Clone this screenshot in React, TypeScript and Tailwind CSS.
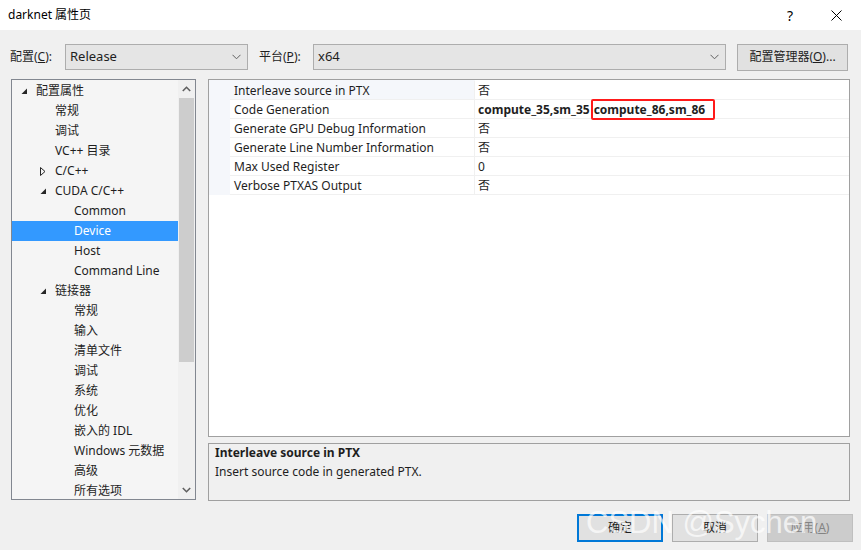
import React from 'react';

const FONT = '"Noto Sans", "Noto Sans CJK SC", sans-serif';

type TreeItem = { label: string; level: number; toggle?: 'open' | 'closed'; selected?: boolean };

const TREE: TreeItem[] = [
  { label: '配置属性', level: 0, toggle: 'open' },
  { label: '常规', level: 1 },
  { label: '调试', level: 1 },
  { label: 'VC++ 目录', level: 1 },
  { label: 'C/C++', level: 1, toggle: 'closed' },
  { label: 'CUDA C/C++', level: 1, toggle: 'open' },
  { label: 'Common', level: 2 },
  { label: 'Device', level: 2, selected: true },
  { label: 'Host', level: 2 },
  { label: 'Command Line', level: 2 },
  { label: '链接器', level: 1, toggle: 'open' },
  { label: '常规', level: 2 },
  { label: '输入', level: 2 },
  { label: '清单文件', level: 2 },
  { label: '调试', level: 2 },
  { label: '系统', level: 2 },
  { label: '优化', level: 2 },
  { label: '嵌入的 IDL', level: 2 },
  { label: 'Windows 元数据', level: 2 },
  { label: '高级', level: 2 },
  { label: '所有选项', level: 2 },
];

const PROPS: { name: string; value: React.ReactNode }[] = [
  { name: 'Interleave source in PTX', value: '否' },
  {
    name: 'Code Generation',
    value: (
      <span className="flex items-center font-bold">
        compute_35,sm_35
        <span className="ml-[1px] flex h-[21px] items-center rounded-[2px] border-2 border-[#ff1a1a] pl-[1px] pr-[8px]">
          compute_86,sm_86
        </span>
      </span>
    ),
  },
  { name: 'Generate GPU Debug Information', value: '否' },
  { name: 'Generate Line Number Information', value: '否' },
  { name: 'Max Used Register', value: '0' },
  { name: 'Verbose PTXAS Output', value: '否' },
];

function Chevron() {
  return (
    <svg width="9" height="6" viewBox="0 0 9 6">
      <path d="M0.5 0.8 L4.5 4.8 L8.5 0.8" fill="none" stroke="#606060" strokeWidth="1" />
    </svg>
  );
}

function Toggle({ kind }: { kind: 'open' | 'closed' }) {
  if (kind === 'open') {
    return (
      <svg width="7" height="7" viewBox="0 0 7 7">
        <path d="M6 0.5 L6 6 L0.5 6 Z" fill="#262626" />
      </svg>
    );
  }
  return (
    <svg width="6" height="9" viewBox="0 0 6 9">
      <path d="M0.5 0.5 L5 4.5 L0.5 8.5 Z" fill="none" stroke="#262626" strokeWidth="1" />
    </svg>
  );
}

function Combo({ value, width }: { value: string; width: string }) {
  return (
    <div className={`flex h-[26px] items-center justify-between border border-[#adadad] bg-[#e5e5e5] pl-[4px] pr-[6px] ${width}`}>
      <span className="text-[13px] text-[#1e1e1e]">{value}</span>
      <Chevron />
    </div>
  );
}

function Tree() {
  return (
    <div className="flex h-[421px] w-[185px] border border-[#828790] bg-[#f5f5f5]">
      <div className="flex flex-1 flex-col overflow-hidden pt-[1px]">
        {TREE.map((item, i) => {
          const pad = item.level === 0 ? 'pl-[24px]' : item.level === 1 ? 'pl-[43px]' : 'pl-[62px]';
          return (
            <div
              key={i}
              className={`relative flex h-[20px] shrink-0 items-center text-[12px] ${pad} ${
                item.selected ? 'bg-[#3399ff] text-white' : 'text-[#1e1e1e]'
              }`}
            >
              {item.toggle && (
                <span className={`absolute flex items-center ${item.level === 0 ? 'left-[9px]' : 'left-[28px]'}`}>
                  <Toggle kind={item.toggle} />
                </span>
              )}
              {item.label}
            </div>
          );
        })}
      </div>
      <div className="flex w-[17px] flex-col items-center bg-[#f0f0f0]">
        <div className="flex h-[18px] items-center justify-center">
          <svg width="9" height="6" viewBox="0 0 9 6">
            <path d="M0.8 5 L4.5 1.3 L8.2 5" fill="none" stroke="#606060" strokeWidth="1.6" />
          </svg>
        </div>
        <div className="h-[264px] w-[15px] bg-[#cdcdcd]" />
        <div className="flex-1" />
        <div className="flex h-[18px] items-center justify-center">
          <svg width="9" height="6" viewBox="0 0 9 6">
            <path d="M0.8 1 L4.5 4.7 L8.2 1" fill="none" stroke="#606060" strokeWidth="1.6" />
          </svg>
        </div>
      </div>
    </div>
  );
}

function PropertyGrid() {
  return (
    <div className="flex h-[358px] flex-col border border-[#a0a0a0] bg-white">
      <div className="flex h-[1px] shrink-0">
        <div className="w-[21px] bg-[#f5f7fb]" />
        <div className="w-[245px] bg-[#f5f7fb]" />
      </div>
      {PROPS.map((p, i) => (
        <div key={p.name} className="flex h-[19px] shrink-0 text-[12px] text-[#1e1e1e]">
          <div className="w-[21px] bg-[#f5f7fb]" />
          <div
            className={`flex w-[245px] items-center border-b border-r border-[#f0f0f0] pl-[4px] pt-[1px] ${
              i === 0 ? 'bg-[#f5f7fb]' : ''
            }`}
          >
            {p.name}
          </div>
          <div className="flex flex-1 items-center border-b border-[#f0f0f0] pl-[3px] pt-[1px]">{p.value}</div>
        </div>
      ))}
    </div>
  );
}

function Button({ label, kind }: { label: React.ReactNode; kind: 'default' | 'normal' | 'disabled' }) {
  const cls =
    kind === 'default'
      ? 'border-2 border-[#0078d7] bg-[#e1e1e1] text-[#1e1e1e]'
      : kind === 'normal'
      ? 'border border-[#adadad] bg-[#e1e1e1] text-[#1e1e1e]'
      : 'border border-[#bfbfbf] bg-[#cccccc] text-[#838383]';
  return (
    <div className={`flex h-[28px] w-[86px] items-center justify-center text-[12px] ${cls}`}>{label}</div>
  );
}

export default function App() {
  return (
    <div className="relative flex h-[550px] w-[861px] flex-col overflow-hidden bg-[#f0f0f0]" style={{ fontFamily: FONT }}>
      {/* title bar */}
      <div className="flex h-[30px] shrink-0 items-center bg-white pl-[8px] text-[12px] text-black">
        <span>darknet 属性页</span>
        <div className="flex-1" />
        <span className="mr-[38px] text-[14px]">?</span>
        <svg width="11" height="11" viewBox="0 0 11 11" className="mr-[19px]">
          <path d="M0.5 0.5 L10.5 10.5 M10.5 0.5 L0.5 10.5" stroke="#000" strokeWidth="1" />
        </svg>
      </div>

      {/* configuration row */}
      <div className="mt-[14px] flex h-[26px] shrink-0 items-center pl-[10px] text-[12px] text-[#1e1e1e]">
        <span className="w-[55px]">
          配置(<span className="underline">C</span>):
        </span>
        <Combo value="Release" width="w-[183px]" />
        <span className="ml-[11px] w-[54px]">
          平台(<span className="underline">P</span>):
        </span>
        <Combo value="x64" width="w-[413px]" />
        <div className="ml-[11px] flex h-[27px] w-[111px] items-center justify-center border border-[#adadad] bg-[#e1e1e1]">
          配置管理器(<span className="underline">O</span>)...
        </div>
      </div>

      {/* main area */}
      <div className="mt-[9px] flex gap-[12px] pl-[11px]">
        <Tree />
        <div className="flex w-[642px] flex-col gap-[6px]">
          <PropertyGrid />
          <div className="flex h-[58px] flex-col border border-[#a0a0a0] bg-[#f0f0f0] px-[6px] text-[12px] text-[#1e1e1e]">
            <div className="h-[18px] font-bold leading-[18px]">Interleave source in PTX</div>
            <div className="h-[19px] leading-[19px]">Insert source code in generated PTX.</div>
          </div>
        </div>
      </div>

      {/* buttons */}
      <div className="mt-[13px] flex gap-[9px] pl-[577px]">
        <Button label="确定" kind="default" />
        <Button label="取消" kind="normal" />
        <Button
          label={
            <span>
              应用(<span className="underline">A</span>)
            </span>
          }
          kind="disabled"
        />
      </div>

      {/* watermark */}
      <div
        className="pointer-events-none absolute left-[586px] top-[503px] text-[31px] leading-[40px] text-white/70"
        style={{ fontFamily: '"Liberation Sans", sans-serif' }}
      >
        CSDN @Sychen
      </div>
    </div>
  );
}
